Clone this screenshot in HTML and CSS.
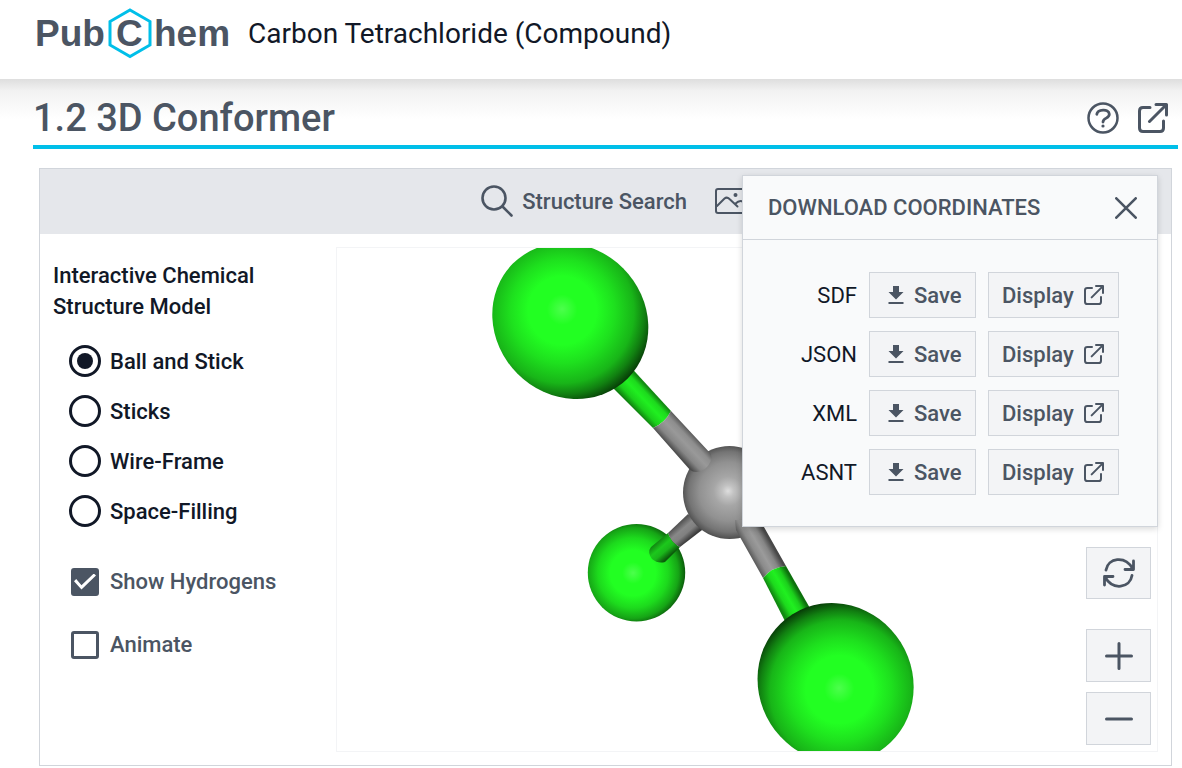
FILE: index.html
```html
<!DOCTYPE html>
<html lang="en">
<head>
<meta charset="utf-8">
<title>Carbon Tetrachloride (Compound) - PubChem</title>
<meta name="viewport" content="width=device-width, initial-scale=1">
<link rel="stylesheet" href="styles.css">
</head>
<body>
<svg class="sprite" aria-hidden="true">
  <symbol id="external" viewBox="0 0 30 30">
    <path d="M12 4.500H5Q1.500 4.500 1.500 8V25Q1.500 28.500 5 28.500H22Q25.500 28.500 25.500 25V18M18 1.500H28.500V12M28 2L11.500 18.500" fill="none" stroke="currentColor" stroke-width="3" stroke-linecap="round" stroke-linejoin="round"/>
  </symbol>
  <symbol id="download" viewBox="0 0 16 18">
    <path d="M5 0H11V6H15.500L8 13.500L0.500 6H5ZM0.500 16H15.500V18H0.500Z" fill="currentColor"/>
  </symbol>
</svg>

<header class="site-header">
  <a class="logo" href="#" aria-label="PubChem">
    <svg width="200" height="54" viewBox="0 0 200 54">
      <g class="logo-text">
        <text x="1" y="40">Pub</text>
        <text x="82" y="40">C</text>
        <text x="120" y="40">hem</text>
      </g>
      <path d="M96 4L116 15.500V39L96 50.500L76 39V15.500Z" fill="none" stroke="#00bfe9" stroke-width="3"/>
    </svg>
  </a>
  <div class="compound-name">Carbon Tetrachloride (Compound)</div>
</header>

<main class="page">
  <div class="section-head">
    <h1>1.2 3D Conformer</h1>
    <div class="section-links">
      <a href="#" aria-label="Help">
        <svg width="32" height="32" viewBox="0 0 32 32" fill="none" stroke="currentColor" stroke-width="2.500" stroke-linecap="round">
          <circle cx="16" cy="16" r="14.500"/>
          <path d="M9.800 12.300C10.500 7.200 21.800 6.300 22.300 12.200C22.600 16.500 16 15.700 16 20" stroke-width="2.800"/>
          <circle cx="16" cy="24" r="1.600" fill="currentColor" stroke="none"/>
        </svg>
      </a>
      <a href="#" aria-label="Open in a new window"><svg width="30" height="30"><use href="#external"/></svg></a>
    </div>
  </div>

  <section class="panel">
    <div class="toolbar">
      <button type="button" class="tool">
        <svg width="32" height="32" viewBox="0 0 32 32" fill="none" stroke="currentColor" stroke-width="2.600" stroke-linecap="round"><circle cx="13" cy="13" r="11.500"/><path d="M21.500 21.500L30.500 30.500"/></svg>
        Structure Search
      </button>
      <button type="button" class="tool" aria-label="Image">
        <svg width="36" height="26" viewBox="0 0 36 26" fill="none" stroke="currentColor" stroke-width="2" stroke-linecap="round"><rect x="1" y="1" width="34" height="24" rx="2"/><path d="M2 18L9.500 10.500Q12 8.500 14.500 11L22.500 18.500M20 16Q25 11.500 28 14L34 19"/><circle cx="20.500" cy="7" r="2" fill="currentColor" stroke="none"/></svg>
      </button>
    </div>

    <div class="panel-body">
      <form class="options">
        <fieldset class="models">
          <legend>Interactive Chemical Structure Model</legend>
          <label><input type="radio" name="model" checked>Ball and Stick</label>
          <label><input type="radio" name="model">Sticks</label>
          <label><input type="radio" name="model">Wire-Frame</label>
          <label><input type="radio" name="model">Space-Filling</label>
        </fieldset>
        <div class="toggles">
          <label><input type="checkbox" checked>Show Hydrogens</label>
          <label><input type="checkbox">Animate</label>
        </div>
      </form>

      <div class="viewer">
        <svg class="molecule" viewBox="337 248 820 503" role="img" aria-label="Ball and stick model">
          <defs>
            <radialGradient id="cl1" gradientUnits="userSpaceOnUse" cx="563" cy="313" r="95" fx="562" fy="309" gradientTransform="rotate(-45 570.300 321)">
              <stop offset="0" stop-color="#4cff4c"/><stop offset=".16" stop-color="#2f2"/><stop offset=".36" stop-color="#2f2"/><stop offset=".55" stop-color="#1ee01e"/><stop offset=".75" stop-color="#18b518"/><stop offset=".86" stop-color="#118011"/><stop offset=".95" stop-color="#094809"/><stop offset="1" stop-color="#042504"/>
            </radialGradient>
            <radialGradient id="cl2" gradientUnits="userSpaceOnUse" cx="841" cy="692" r="94" fx="839" fy="688" gradientTransform="rotate(-58 835.600 683)">
              <stop offset="0" stop-color="#4cff4c"/><stop offset=".16" stop-color="#2f2"/><stop offset=".36" stop-color="#2f2"/><stop offset=".55" stop-color="#1ee01e"/><stop offset=".75" stop-color="#18b518"/><stop offset=".86" stop-color="#118011"/><stop offset=".95" stop-color="#094809"/><stop offset="1" stop-color="#042504"/>
            </radialGradient>
            <radialGradient id="cl3" gradientUnits="userSpaceOnUse" cx="633" cy="573" r="54" fx="633" fy="573">
              <stop offset="0" stop-color="#4cff4c"/><stop offset=".2" stop-color="#2f2"/><stop offset=".42" stop-color="#2f2"/><stop offset=".65" stop-color="#1dda1d"/><stop offset=".84" stop-color="#16a516"/><stop offset=".95" stop-color="#0d650d"/><stop offset="1" stop-color="#0a4a0a"/>
            </radialGradient>
            <radialGradient id="c" gradientUnits="userSpaceOnUse" cx="729" cy="492" r="49" fx="728" fy="491">
              <stop offset="0" stop-color="#dedede"/><stop offset=".12" stop-color="#c2c2c2"/><stop offset=".3" stop-color="#a6a6a6"/><stop offset=".6" stop-color="#919191"/><stop offset=".82" stop-color="#747474"/><stop offset="1" stop-color="#444"/>
            </radialGradient>
            <linearGradient id="gray1" gradientUnits="userSpaceOnUse" x1="652" y1="428" x2="670" y2="411"><stop offset="0" stop-color="#4c4c4c"/><stop offset=".25" stop-color="#868686"/><stop offset=".55" stop-color="#999"/><stop offset=".8" stop-color="#8e8e8e"/><stop offset="1" stop-color="#606060"/></linearGradient>
            <linearGradient id="green1" gradientUnits="userSpaceOnUse" x1="652" y1="428" x2="670" y2="411"><stop offset="0" stop-color="#0f800f"/><stop offset=".25" stop-color="#1bd01b"/><stop offset=".55" stop-color="#20ef20"/><stop offset=".8" stop-color="#1dda1d"/><stop offset="1" stop-color="#118a11"/></linearGradient>
            <linearGradient id="gray2" gradientUnits="userSpaceOnUse" x1="668" y1="533" x2="680" y2="547"><stop offset="0" stop-color="#555"/><stop offset=".35" stop-color="#888"/><stop offset=".65" stop-color="#808080"/><stop offset="1" stop-color="#3d3d3d"/></linearGradient>
            <linearGradient id="green2" gradientUnits="userSpaceOnUse" x1="668" y1="533" x2="680" y2="547"><stop offset="0" stop-color="#128a12"/><stop offset=".35" stop-color="#1cc81c"/><stop offset=".65" stop-color="#1ab51a"/><stop offset="1" stop-color="#0b5b0b"/></linearGradient>
            <linearGradient id="gray3" gradientUnits="userSpaceOnUse" x1="763" y1="578" x2="784" y2="566"><stop offset="0" stop-color="#585858"/><stop offset=".25" stop-color="#8b8b8b"/><stop offset=".5" stop-color="#9b9b9b"/><stop offset=".75" stop-color="#868686"/><stop offset="1" stop-color="#484848"/></linearGradient>
            <linearGradient id="green3" gradientUnits="userSpaceOnUse" x1="763" y1="578" x2="784" y2="566"><stop offset="0" stop-color="#118a11"/><stop offset=".25" stop-color="#1dda1d"/><stop offset=".5" stop-color="#20f020"/><stop offset=".75" stop-color="#1cd01c"/><stop offset="1" stop-color="#0d700d"/></linearGradient>
          </defs>
          <path d="M605 380L626 362L671 411Q665 423 653 428Z" fill="url(#green1)"/>
          <circle cx="636.500" cy="572.700" r="48.700" fill="url(#cl3)"/>
          <path d="M688 514L668 533Q671 543 680 547L706 527Z" fill="url(#gray2)"/>
          <path d="M668 533L651 547Q647 552 652 559Q658 564 665 562L680 547Q671 543 668 533Z" fill="url(#green2)"/>
          <circle cx="729.500" cy="492.500" r="46.500" fill="url(#c)"/>
          <path d="M653 428Q665 423 671 411L711 454Q713 461 706 468Q697 475 690 470Z" fill="url(#gray1)"/>
          <path d="M735 520L736 530L763 578Q772 567 786 566L760 520Z" fill="url(#gray3)"/>
          <path d="M763 578Q772 567 786 566L815 617L790 631Z" fill="url(#green3)"/>
          <ellipse cx="570.300" cy="321" rx="81.200" ry="74.700" transform="rotate(45 570.300 321)" fill="url(#cl1)"/>
          <ellipse cx="835.600" cy="683" rx="81.200" ry="76.800" transform="rotate(58 835.600 683)" fill="url(#cl2)"/>
        </svg>
        <div class="view-controls">
          <button type="button" class="reset" aria-label="Reset view">
            <svg width="32" height="30" viewBox="0 0 32 30" fill="none" stroke="currentColor" stroke-width="2.800" stroke-linecap="round" stroke-linejoin="round"><path d="M3 12C5 0 22-3 29.500 10.500M30.500 3V11.500H22M29 17.500C27 30 10 33 2 19M1.500 27V18.500H10"/></svg>
          </button>
          <button type="button" aria-label="Zoom in">
            <svg width="28" height="28" viewBox="0 0 28 28" stroke="currentColor" stroke-width="3" stroke-linecap="round"><path d="M1.500 14H26.500M14 1.500V26.500"/></svg>
          </button>
          <button type="button" aria-label="Zoom out">
            <svg width="28" height="28" viewBox="0 0 28 28" stroke="currentColor" stroke-width="3" stroke-linecap="round"><path d="M1.500 14H26.500"/></svg>
          </button>
        </div>
      </div>
    </div>

    <div class="popup" role="dialog" aria-labelledby="popup-title">
      <div class="popup-head">
        <h2 id="popup-title">DOWNLOAD COORDINATES</h2>
        <button type="button" class="close" aria-label="Close">
          <svg width="22" height="22" viewBox="0 0 22 22" stroke="currentColor" stroke-width="2.600" stroke-linecap="round"><path d="M1.300 1.300L20.700 20.700M20.700 1.300L1.300 20.700"/></svg>
        </button>
      </div>
      <div class="formats">
        <span>SDF</span>
        <button type="button" class="save"><svg width="16" height="18"><use href="#download"/></svg>Save</button>
        <a class="display" href="#">Display<svg width="20" height="20"><use href="#external"/></svg></a>
        <span>JSON</span>
        <button type="button" class="save"><svg width="16" height="18"><use href="#download"/></svg>Save</button>
        <a class="display" href="#">Display<svg width="20" height="20"><use href="#external"/></svg></a>
        <span>XML</span>
        <button type="button" class="save"><svg width="16" height="18"><use href="#download"/></svg>Save</button>
        <a class="display" href="#">Display<svg width="20" height="20"><use href="#external"/></svg></a>
        <span>ASNT</span>
        <button type="button" class="save"><svg width="16" height="18"><use href="#download"/></svg>Save</button>
        <a class="display" href="#">Display<svg width="20" height="20"><use href="#external"/></svg></a>
      </div>
    </div>
  </section>
</main>
</body>
</html>
```
FILE: styles.css
```css
* {
  box-sizing: border-box;
}

body {
  margin: 0;
  background: #fff;
  color: #111827;
  font: 400 22px/31px Roboto, "Liberation Sans", sans-serif;
}

svg {
  display: block;
  flex: none;
}

button,
input {
  font: inherit;
  color: inherit;
  margin: 0;
}

button {
  cursor: pointer;
}

a {
  color: inherit;
  text-decoration: none;
}

.sprite {
  position: absolute;
  width: 0;
  height: 0;
}

.site-header {
  display: flex;
  align-items: center;
  gap: 14px;
  padding: 6px 34px 19px;
}

.logo-text {
  font: bold 37px "Liberation Sans", Arial, sans-serif;
  fill: #4b5563;
}

.compound-name {
  font-size: 28px;
}

.page {
  padding: 0 4px 0 33px;
  background: linear-gradient(#dedede, #f2f2f2 12px, #fff 40px);
}

.section-head {
  display: flex;
  align-items: center;
  justify-content: space-between;
  padding: 18px 10px 6px 0;
  border-bottom: 4px solid #00bfe9;
  color: #4b5563;
}

.section-head h1 {
  margin: 0;
  font-size: 38px;
  line-height: 42px;
  font-weight: 500;
}

.section-links {
  display: flex;
  align-items: center;
  gap: 19px;
}

.panel {
  position: relative;
  margin: 19px 6px 0;
  border: 1px solid #d1d5db;
  background: #fff;
}

.toolbar {
  display: flex;
  justify-content: flex-end;
  align-items: center;
  gap: 28px;
  padding: 16px 420px 17px 13px;
  background: #e5e7eb;
  color: #4b5563;
}

.tool {
  display: flex;
  align-items: center;
  gap: 9px;
  padding: 0;
  border: 0;
  background: none;
  font-weight: 500;
}

.panel-body {
  display: flex;
  padding: 13px;
}

.options {
  flex: 0 0 283px;
  padding-top: 13px;
  font-weight: 500;
}

.models {
  display: flex;
  flex-direction: column;
  gap: 18px;
  margin: 0;
  padding: 0;
  border: 0;
}

.models legend {
  width: 230px;
  padding: 0;
  margin-bottom: 23px;
}

.options label {
  display: flex;
  align-items: center;
  gap: 9px;
  padding-left: 16px;
}

.options input {
  appearance: none;
  display: grid;
  place-items: center;
  flex: none;
  background: #fff;
}

.options input[type="radio"] {
  width: 32px;
  height: 32px;
  border: 3px solid #111827;
  border-radius: 50%;
}

.options input[type="radio"]:checked::after {
  content: "";
  width: 16px;
  height: 16px;
  border-radius: 50%;
  background: #111827;
}

.toggles {
  display: flex;
  flex-direction: column;
  gap: 32px;
  margin-top: 39px;
  color: #4b5563;
}

.options input[type="checkbox"] {
  width: 28px;
  height: 28px;
  margin: 0 2px;
  border: 3px solid #4b5563;
  border-radius: 3px;
}

.options input[type="checkbox"]:checked {
  background: #4b5563;
}

.options input[type="checkbox"]:checked::after {
  content: "";
  width: 22px;
  height: 16px;
  background: #fff;
  clip-path: polygon(0 48%, 10% 35%, 34% 74%, 90% 0, 100% 12%, 34% 100%);
}

.viewer {
  position: relative;
  flex: 1;
  min-width: 0;
  border: 1px solid #f3f4f6;
}

.molecule {
  width: 100%;
  height: auto;
}

.view-controls {
  position: absolute;
  right: 6px;
  bottom: 6px;
  display: flex;
  flex-direction: column;
  gap: 10px;
}

.view-controls button {
  display: grid;
  place-items: center;
  width: 65px;
  height: 53px;
  padding: 0;
  border: 1px solid #d1d5db;
  background: #f3f4f6;
  color: #4b5563;
}

.view-controls .reset {
  height: 52px;
  margin-bottom: 20px;
}

.popup {
  position: absolute;
  top: 6px;
  right: 13px;
  width: 416px;
  border: 1px solid #d1d5db;
  background: #f9fafb;
  box-shadow: 0 2px 6px rgba(0, 0, 0, 0.15);
}

.popup-head {
  display: flex;
  align-items: center;
  justify-content: space-between;
  padding: 16px 20px 16px 25px;
  border-bottom: 1px solid #d1d5db;
  color: #4b5563;
}

.popup-head h2 {
  margin: 0;
  font-size: 22px;
  font-weight: 500;
}

.close {
  padding: 0;
  border: 0;
  background: none;
}

.formats {
  display: grid;
  grid-template-columns: auto 107px 131px;
  gap: 13px 12px;
  align-items: center;
  justify-content: end;
  padding: 32px 38px 31px;
}

.formats span {
  text-align: right;
}

.save,
.display {
  display: flex;
  align-items: center;
  height: 46px;
  padding: 0 13px;
  border: 1px solid #d1d5db;
  background: #f3f4f6;
  color: #4b5563;
  font-weight: 500;
}

.save {
  gap: 10px;
  padding-left: 18px;
}

.display {
  gap: 10px;
}
```
